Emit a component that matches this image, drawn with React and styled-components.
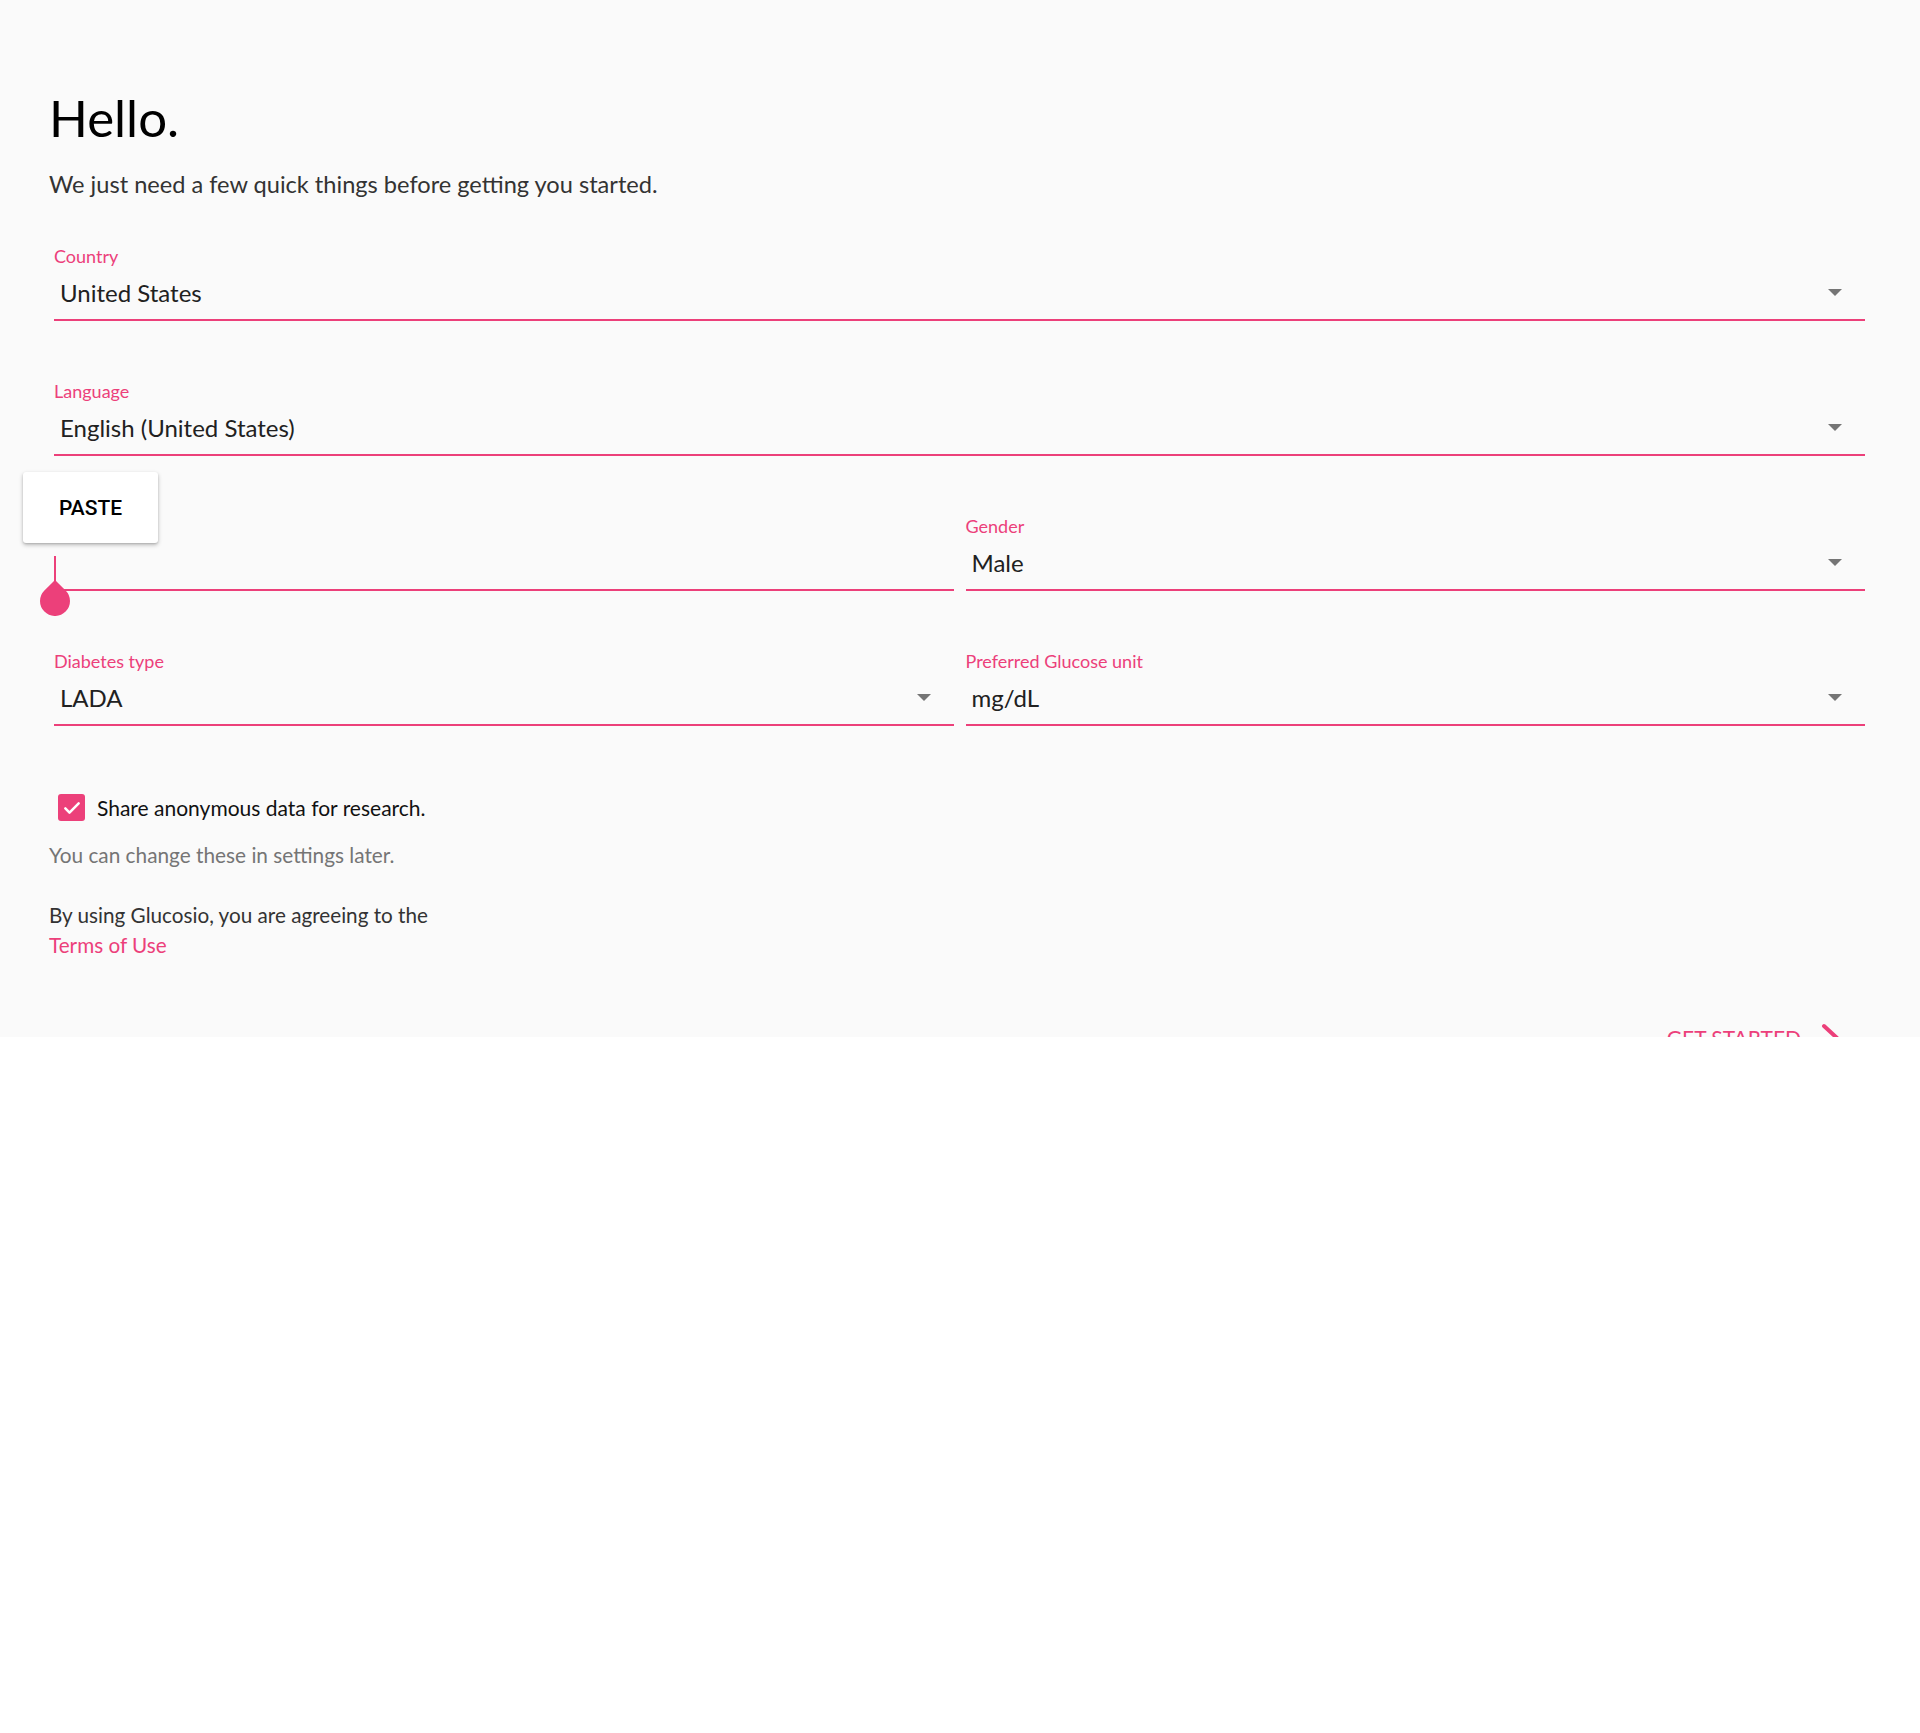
import React from 'react';
import styled, { createGlobalStyle } from 'styled-components';

const pink = '#ec407a';

const Global = createGlobalStyle`
  html, body {
    margin: 0;
    background: #ffffff;
  }
  * {
    box-sizing: border-box;
  }
`;

const Screen = styled.div`
  height: 1037px;
  overflow: hidden;
  background: #fafafa;
  padding: 87px 55px 0 49px;
  font-family: Lato, 'Open Sans', sans-serif;
`;

const Title = styled.h1`
  margin: 0;
  font-size: 51px;
  line-height: 62px;
  font-weight: 400;
  color: #000;
`;

const Lead = styled.p`
  margin: 20px 0 0;
  font-size: 23.6px;
  line-height: 30px;
  color: #333;
`;

const Form = styled.div`
  margin: 46px 0 0 5px;
  display: flex;
  flex-direction: column;
  gap: 59px;
`;

const Row = styled.div`
  display: grid;
  grid-template-columns: 1fr 1fr;
  column-gap: 12px;
`;

const Field = styled.div`
  position: relative;
  display: flex;
  flex-direction: column;
`;

const Label = styled.label`
  font-size: 18px;
  line-height: 22px;
  height: 22px;
  color: ${pink};
`;

const Value = styled.div`
  display: flex;
  align-items: center;
  justify-content: space-between;
  padding: 0 23px 2px 6px;
  font-size: 24px;
  color: #212121;
  border-bottom: 2px solid ${pink};
  height: 54px;
`;

const Caret = styled.span`
  width: 0;
  height: 0;
  border-left: 7px solid transparent;
  border-right: 7px solid transparent;
  border-top: 7px solid #757575;
`;

const Cursor = styled.span`
  position: absolute;
  left: 0;
  top: 41px;
  width: 2px;
  height: 25px;
  background: ${pink};
`;

const Handle = styled.svg`
  position: absolute;
  left: -14px;
  top: 65px;
`;

const PastePopup = styled.div`
  position: absolute;
  left: -31px;
  top: -43px;
  width: 135px;
  height: 71px;
  background: #fff;
  border-radius: 3px;
  box-shadow: 0 2px 4px rgba(0, 0, 0, 0.25), 0 1px 2px rgba(0, 0, 0, 0.12);
  display: flex;
  align-items: center;
  justify-content: center;
  font-family: Roboto, sans-serif;
  font-weight: 500;
  font-size: 21px;
  color: #000;
  z-index: 2;
`;

const CheckRow = styled.div`
  margin-top: 68px;
  display: flex;
  align-items: center;
  gap: 12px;
  padding-left: 9px;
  font-size: 21px;
  color: #111;
`;

const Box = styled.span`
  width: 27px;
  height: 27px;
  border-radius: 3px;
  background: ${pink};
  display: flex;
  align-items: center;
  justify-content: center;
`;

const Hint = styled.p`
  margin: 20px 0 0;
  font-size: 20.8px;
  line-height: 28px;
  color: #757575;
`;

const Terms = styled.p`
  margin: 31px 0 0;
  font-size: 20.7px;
  line-height: 30px;
  color: #333;
`;

const TermsLink = styled.span`
  display: block;
  color: ${pink};
`;

const Footer = styled.div`
  margin-top: 63px;
  display: flex;
  justify-content: flex-end;
  align-items: center;
  gap: 20px;
  padding-right: 24px;
  font-size: 21px;
  line-height: 24px;
  color: ${pink};
  text-transform: uppercase;
`;

const Select = ({ label, value }) => (
  <Field>
    <Label>{label}</Label>
    <Value>
      <span>{value}</span>
      <Caret />
    </Value>
  </Field>
);

export default function App() {
  return (
    <>
      <Global />
      <Screen>
        <Title>Hello.</Title>
        <Lead>We just need a few quick things before getting you started.</Lead>
        <Form>
          <Select label="Country" value="United States" />
          <Select label="Language" value="English (United States)" />
          <Row>
            <Field>
              <PastePopup>PASTE</PastePopup>
              <Label />
              <Value />
              <Cursor />
              <Handle width="30" height="36" viewBox="0 0 30 36">
                <path d="M15 0 L25.6 10.4 A15 15 0 1 1 4.4 10.4 Z" fill={pink} />
              </Handle>
            </Field>
            <Select label="Gender" value="Male" />
          </Row>
          <Row>
            <Select label="Diabetes type" value="LADA" />
            <Select label="Preferred Glucose unit" value="mg/dL" />
          </Row>
        </Form>
        <CheckRow>
          <Box>
            <svg width="20" height="20" viewBox="0 0 24 24">
              <path d="M4 12.5l5 5L20 6.5" fill="none" stroke="#fff" strokeWidth="3" strokeLinecap="round" strokeLinejoin="round" />
            </svg>
          </Box>
          Share anonymous data for research.
        </CheckRow>
        <Hint>You can change these in settings later.</Hint>
        <Terms>
          By using Glucosio, you are agreeing to the
          <TermsLink>Terms of Use</TermsLink>
        </Terms>
        <Footer>
          Get started
          <svg width="20" height="30" viewBox="0 0 20 30">
            <path d="M3 3l13 12L3 27" fill="none" stroke={pink} strokeWidth="4" strokeLinecap="round" strokeLinejoin="round" />
          </svg>
        </Footer>
      </Screen>
    </>
  );
}
